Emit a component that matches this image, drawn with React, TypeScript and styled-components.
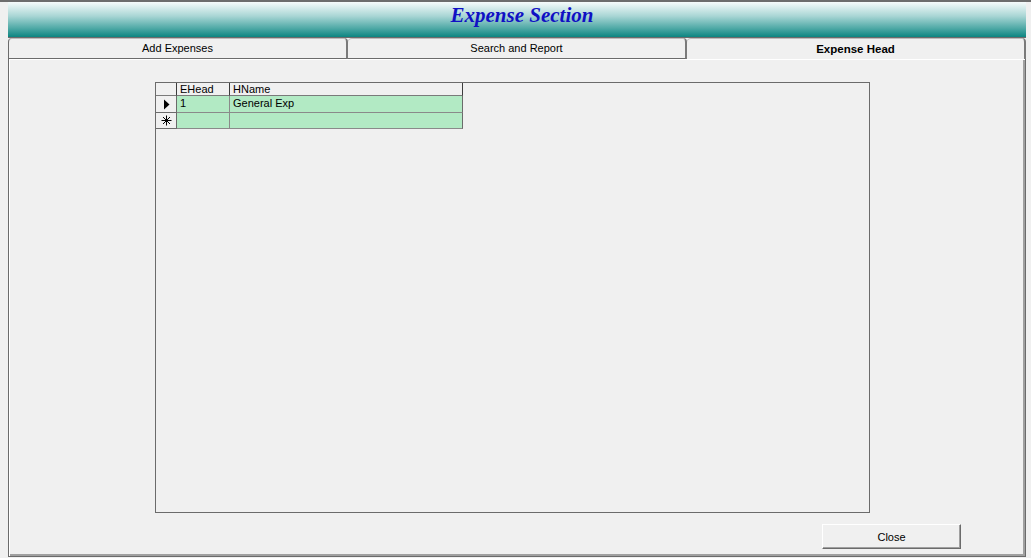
import React from "react";
import styled, { createGlobalStyle } from "styled-components";

const Global = createGlobalStyle`
  html, body { margin: 0; padding: 0; background: #f0f0f0; }
  body { font-family: "Liberation Sans", Arial, sans-serif; font-size: 11px; color: #000; }
  * { box-sizing: border-box; }
`;

const Window = styled.div`
  width: 1031px;
  height: 558px;
  display: flex;
  flex-direction: column;
  border-top: 2px solid #6d6d6d;
  background: #f0f0f0;
  overflow: hidden;
`;

const Header = styled.div`
  margin: 0 5px 0 8px;
  height: 36px;
  flex: none;
  border-bottom: 1px solid #6b6b6b;
  background: linear-gradient(#f6fbfb 0%, #a9d6d5 40%, #4fa9a6 75%, #0c8581 100%);
  display: flex;
  justify-content: center;
  padding-top: 1px;
  padding-left: 10px;
`;

const Title = styled.h1`
  margin: 0;
  font-family: "Liberation Serif", "Times New Roman", serif;
  font-style: italic;
  font-weight: bold;
  font-size: 21px;
  line-height: 24px;
  color: #1010c4;
`;

const Body = styled.div`
  margin: 0 5px 0 8px;
  flex: 1;
  display: flex;
  flex-direction: column;
  min-height: 0;
`;

const TabStrip = styled.div`
  display: flex;
  height: 21px;
  flex: none;
`;

const Tab = styled.div<{ $active?: boolean; $first?: boolean }>`
  flex: 1;
  display: flex;
  justify-content: center;
  align-items: ${(p) => (p.$active ? "flex-start" : "center")};
  padding-top: ${(p) => (p.$active ? "5px" : "0")};
  font-size: ${(p) => (p.$active ? "11.5px" : "11px")};
  font-weight: ${(p) => (p.$active ? "bold" : "normal")};
  background: #f0f0f0;
  border-left: ${(p) => (p.$first ? "1px solid #6b6b6b" : "none")};
  border-right: 2px solid #7a7a7a;
  border-bottom: ${(p) => (p.$active ? "none" : "1px solid #6b6b6b")};
  border-top-left-radius: 4px;
  border-top-right-radius: 4px;
  box-shadow: inset 0 1px 0 #bcbcbc;
  white-space: nowrap;
`;

const Panel = styled.div`
  flex: 1;
  display: flex;
  flex-direction: column;
  border-left: 1px solid #6b6b6b;
  border-right: 1px solid #6b6b6b;
  border-bottom: 1px solid #6b6b6b;
  box-shadow: inset 1px 1px 0 #ffffff, inset -2px -2px 0 #a0a0a0;
  margin-bottom: 1px;
  padding: 23px 0 0 146px;
`;

const GridBox = styled.div`
  width: 715px;
  height: 431px;
  border: 1px solid #6b6b6b;
  background: #f0f0f0;
`;

const Table = styled.div`
  display: grid;
  grid-template-columns: 21px 53px 233px;
  grid-template-rows: 13px 17px 16px;
  width: 307px;
`;

const HeadCell = styled.div`
  border-right: 1px solid #3c3c3c;
  border-bottom: 1px solid #7a7a7a;
  background: #f0f0f0;
  padding-left: 3px;
  font-size: 11px;
  line-height: 13px;
  overflow: hidden;
`;

const RowHead = styled.div`
  border-right: 1px solid #6b6b6b;
  border-bottom: 1px solid #6b6b6b;
  background: #f0f0f0;
  display: flex;
  align-items: center;
  justify-content: center;
`;

const Cell = styled.div<{ $last?: boolean }>`
  background: #b2eac4;
  border-right: 1px solid ${(p) => (p.$last ? "#6b6b6b" : "#8a8a8a")};
  border-bottom: 1px solid #8a8a8a;
  padding-left: 3px;
  line-height: 14px;
  font-size: 11px;
  white-space: nowrap;
  overflow: hidden;
`;

const Footer = styled.div`
  display: flex;
  justify-content: flex-end;
  padding: 11px 64px 0 0;
`;

const CloseButton = styled.button`
  width: 139px;
  height: 25px;
  background: #f0f0f0;
  font-family: "Liberation Sans", Arial, sans-serif;
  font-size: 11px;
  color: #000;
  border: none;
  border-top: 1px solid #ffffff;
  border-left: 1px solid #ffffff;
  border-right: 1px solid #6b6b6b;
  border-bottom: 1px solid #6b6b6b;
  box-shadow: inset -1px -1px 0 #a0a0a0;
  padding: 0;
  cursor: default;
`;

const Arrow = () => (
  <svg width="7" height="11" viewBox="0 0 7 11">
    <path d="M1 0.5 L6.5 5.5 L1 10.5 Z" fill="#000" />
  </svg>
);

const Star = () => (
  <svg width="11" height="11" viewBox="0 0 11 11">
    <g stroke="#000" strokeWidth="1">
      <line x1="5.5" y1="0.5" x2="5.5" y2="10.5" />
      <line x1="0.5" y1="5.5" x2="10.5" y2="5.5" />
      <line x1="2" y1="2" x2="9" y2="9" />
      <line x1="9" y1="2" x2="2" y2="9" />
    </g>
  </svg>
);

export default function App() {
  return (
    <>
      <Global />
      <Window>
        <Header>
          <Title>Expense Section</Title>
        </Header>
        <Body>
          <TabStrip>
            <Tab $first>Add Expenses</Tab>
            <Tab>Search and Report</Tab>
            <Tab $active>Expense Head</Tab>
          </TabStrip>
          <Panel>
            <GridBox>
              <Table>
                <HeadCell />
                <HeadCell>EHead</HeadCell>
                <HeadCell>HName</HeadCell>
                <RowHead>
                  <Arrow />
                </RowHead>
                <Cell>1</Cell>
                <Cell $last>General Exp</Cell>
                <RowHead>
                  <Star />
                </RowHead>
                <Cell />
                <Cell $last />
              </Table>
            </GridBox>
            <Footer>
              <CloseButton>Close</CloseButton>
            </Footer>
          </Panel>
        </Body>
      </Window>
    </>
  );
}
